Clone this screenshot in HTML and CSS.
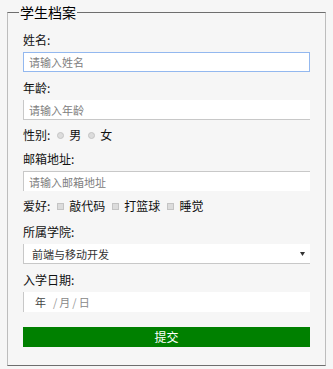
FILE: index.html
```html
<!DOCTYPE html>
<html lang="zh-CN">
<head>
<meta charset="utf-8">
<title>学生档案</title>
<link rel="stylesheet" href="styles.css">
</head>
<body>
<fieldset class="archive">
  <legend class="archive-title">学生档案</legend>
  <form class="form">
    <div class="field">
      <label class="label" for="name">姓名:</label>
      <input class="input input-focus" id="name" type="text" placeholder="请输入姓名">
    </div>
    <div class="field">
      <label class="label" for="age">年龄:</label>
      <input class="input input-lb" id="age" type="text" placeholder="请输入年龄">
    </div>
    <div class="field inline-row">
      <span class="label">性别:</span>
      <label class="choice"><span class="radio"></span>男</label>
      <label class="choice"><span class="radio"></span>女</label>
    </div>
    <div class="field">
      <label class="label" for="email">邮箱地址:</label>
      <input class="input input-lt" id="email" type="text" placeholder="请输入邮箱地址">
    </div>
    <div class="field inline-row hobbies">
      <span class="label">爱好:</span>
      <label class="choice"><span class="check"></span>敲代码</label>
      <label class="choice"><span class="check"></span>打篮球</label>
      <label class="choice"><span class="check"></span>睡觉</label>
    </div>
    <div class="field">
      <label class="label" for="college">所属学院:</label>
      <div class="select-wrap">
        <select class="input select input-lb" id="college">
          <option>前端与移动开发</option>
        </select>
        <svg class="select-arrow" width="5" height="4" viewBox="0 0 5 4"><polygon points="0,0 5,0 2.5,4" fill="#333"/></svg>
      </div>
    </div>
    <div class="field">
      <span class="label">入学日期:</span>
      <div class="input input-l date"><span class="d-year">年</span><span class="d-sep first">/</span><span class="d-part">月</span><span class="d-sep">/</span><span class="d-part">日</span></div>
    </div>
    <button class="submit" type="button">提交</button>
  </form>
</fieldset>
</body>
</html>
```

FILE: styles.css
```css
html, body {
  background: #f6f6f6;
}
body {
  margin: 0;
  font-family: "Noto Sans CJK SC", "Noto Sans", sans-serif;
  font-size: 12px;
  color: #111;
}
.archive {
  margin: 2px 7px 0 7px;
  padding: 9px 15px 18px 15px;
  border-style: solid;
  border-width: 1px;
  border-color: #6e6e6e #bdbdbd #6e6e6e #bdbdbd;
  min-width: 0;
}
.archive-title {
  font-size: 14px;
  line-height: 20px;
  padding: 0 1px;
  margin-left: -4px;
  color: #000;
}
.form {
  display: flex;
  flex-direction: column;
  margin: 0;
}
.field {
  display: flex;
  flex-direction: column;
  margin-bottom: 7px;
}
.label {
  display: block;
  line-height: 18px;
  margin-bottom: 3px;
}
.inline-row {
  flex-direction: row;
  align-items: center;
  line-height: 16px;
}
.hobbies {
  margin-bottom: 9px;
}
.inline-row .label {
  margin-bottom: 0;
  line-height: 16px;
  margin-right: 7px;
}
.choice {
  display: flex;
  align-items: center;
  margin-right: 7px;
}
.radio {
  width: 5px;
  height: 5px;
  border-radius: 50%;
  background: #dcdcdc;
  border: 1px solid #c4c4c4;
  margin-right: 5px;
}
.check {
  width: 5px;
  height: 5px;
  background: #dcdcdc;
  border: 1px solid #c4c4c4;
  margin-right: 5px;
}
.input {
  box-sizing: border-box;
  width: 100%;
  height: 20px;
  margin: 0;
  padding: 0 5px;
  font-family: "Noto Sans CJK SC", "Noto Sans", sans-serif;
  font-size: 11px;
  color: #333;
  background: #fff;
  border: 0;
  outline: none;
}
.input::placeholder {
  color: #808080;
}
.input-focus {
  border: 1px solid #93b8ef;
}
.input-lb {
  border-left: 1px solid #c8c8c8;
  border-bottom: 1px solid #c8c8c8;
}
.input-lt {
  border-left: 1px solid #c8c8c8;
  border-top: 1px solid #c8c8c8;
}
.input-l {
  border-left: 1px solid #c8c8c8;
}
.select-wrap {
  position: relative;
}
.select {
  appearance: none;
  -webkit-appearance: none;
  padding-left: 8px;
  border-radius: 0;
}
.select-arrow {
  position: absolute;
  right: 5px;
  top: 8px;
}
.date {
  display: flex;
  align-items: center;
  padding-left: 11px;
  line-height: 18px;
}
.d-year {
  color: #444;
}
.d-sep {
  color: #9a9a9a;
  margin: 0 2px;
}
.d-sep.first {
  margin-left: 7px;
}
.d-part {
  color: #888;
}
.submit {
  margin-top: 8px;
  height: 20px;
  width: 100%;
  border: 0;
  background: #008000;
  color: #fff;
  font-family: "Noto Sans CJK SC", "Noto Sans", sans-serif;
  font-size: 12px;
  line-height: 20px;
  padding: 0;
}
```
